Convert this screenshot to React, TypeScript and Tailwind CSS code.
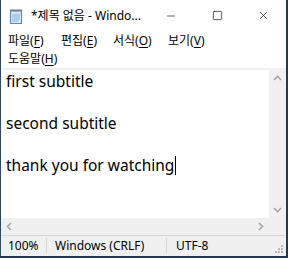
import { Minus, Square, X } from 'lucide-react';

const ui = { fontFamily: '"Noto Sans", "Noto Sans CJK KR", sans-serif' };

function Mn({ label, k }: { label: string; k: string }) {
  return (
    <span className="whitespace-nowrap">
      {label}(<span className="underline underline-offset-2">{k}</span>)
    </span>
  );
}

function NotepadIcon() {
  return (
    <svg width="16" height="16" viewBox="0 0 16 16">
      <rect x="2.5" y="2.5" width="11" height="13" fill="#cfe6f7" stroke="#5d8bb8" />
      <path d="M4 7h8M4 9h8M4 11h8M4 13h6" stroke="#8fb3d4" strokeWidth="1" />
      <path d="M3 1v3M5 1v3M7 1v3M9 1v3M11 1v3M13 1v3" stroke="#6c7a89" strokeWidth="1" />
    </svg>
  );
}

function Arrow({ d }: { d: string }) {
  return (
    <svg width="9" height="9" viewBox="0 0 9 9">
      <path d={d} stroke="#a6a6a6" strokeWidth="1.6" fill="none" />
    </svg>
  );
}

export default function App() {
  return (
    <div className="w-[288px] h-[258px] bg-[#203a56] overflow-hidden" style={ui}>
      <div className="w-[286px] h-[256px] bg-white border-l border-[#2c4a68] flex flex-col text-[12px] text-black">
        {/* title bar */}
        <div className="h-[31px] flex items-center shrink-0">
          <div className="pl-[7px] pr-[7px] flex items-center">
            <NotepadIcon />
          </div>
          <div className="flex-1 truncate pt-[1px]">*제목 없음 - Windo...</div>
          <div className="flex h-full">
            <div className="w-[46px] flex items-center justify-center">
              <Minus className="w-[12px] h-[12px]" strokeWidth={1.2} />
            </div>
            <div className="w-[46px] flex items-center justify-center">
              <Square className="w-[11px] h-[11px]" strokeWidth={1.4} absoluteStrokeWidth />
            </div>
            <div className="w-[46px] flex items-center justify-center">
              <X className="w-[13px] h-[13px]" strokeWidth={1.2} />
            </div>
          </div>
        </div>
        {/* menu */}
        <div className="flex flex-col shrink-0 pl-[7px]">
          <div className="h-[19px] flex items-center">
            <div className="w-[53px]"><Mn label="파일" k="F" /></div>
            <div className="w-[52px]"><Mn label="편집" k="E" /></div>
            <div className="w-[55px]"><Mn label="서식" k="O" /></div>
            <div><Mn label="보기" k="V" /></div>
          </div>
          <div className="h-[18px] flex items-center">
            <Mn label="도움말" k="H" />
          </div>
        </div>
        <div className="h-[2px] bg-[#f0f0f0] shrink-0" />
        {/* edit area */}
        <div className="flex flex-1 min-h-0">
          <div className="flex-1 flex flex-col">
            <div className="flex-1 pl-[5px] pt-[1px] text-[15.5px] leading-[21px]">
              <div>first subtitle</div>
              <div>&nbsp;</div>
              <div>second subtitle</div>
              <div>&nbsp;</div>
              <div className="flex items-center">
                thank you for watching
                <span className="inline-block w-[1px] h-[19px] bg-black ml-[1px]" />
              </div>
            </div>
            <div className="h-[17px] bg-[#f0f0f0] flex items-center justify-between px-[4px]">
              <Arrow d="M6 1L2.5 4.5L6 8" />
              <Arrow d="M3 1L6.5 4.5L3 8" />
            </div>
          </div>
          <div className="w-[17px] bg-[#f0f0f0] flex flex-col">
            <div className="flex-1 flex flex-col justify-between items-center py-[4px]">
              <Arrow d="M1 6L4.5 2.5L8 6" />
              <Arrow d="M1 3L4.5 6.5L8 3" />
            </div>
            <div className="h-[17px]" />
          </div>
        </div>
        {/* status bar */}
        <div className="h-[21px] bg-[#f0f0f0] border-t border-[#d7d7d7] flex items-center shrink-0 relative">
          <div className="w-[46px] pl-[7px] border-r border-[#d7d7d7] h-[16px] flex items-center">100%</div>
          <div className="w-[120px] pl-[8px] border-r border-[#d7d7d7] h-[16px] flex items-center">Windows (CRLF)</div>
          <div className="pl-[9px]">UTF-8</div>
          <svg className="absolute right-[2px] bottom-[2px]" width="10" height="10" viewBox="0 0 10 10">
            <rect x="7" y="1" width="2" height="2" fill="#b8b8b8" />
            <rect x="4" y="4" width="2" height="2" fill="#b8b8b8" />
            <rect x="7" y="4" width="2" height="2" fill="#b8b8b8" />
            <rect x="1" y="7" width="2" height="2" fill="#b8b8b8" />
            <rect x="4" y="7" width="2" height="2" fill="#b8b8b8" />
            <rect x="7" y="7" width="2" height="2" fill="#b8b8b8" />
          </svg>
        </div>
      </div>
    </div>
  );
}
